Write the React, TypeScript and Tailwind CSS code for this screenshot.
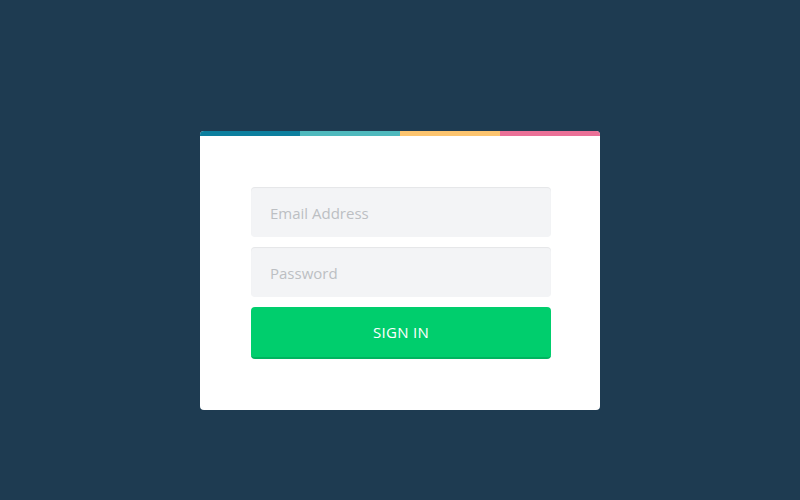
import React from "react";

export default function App() {
  return (
    <div className="w-[800px] h-[500px] bg-[#1e3b51] flex justify-center pt-[131px]" style={{ fontFamily: '"Open Sans", Lato, sans-serif' }}>
      <div className="w-[400px] h-[279px] bg-white rounded-[4px] overflow-hidden flex flex-col">
        <div className="flex h-[5px]">
          <div className="flex-1 bg-[#0c7f9e]" />
          <div className="flex-1 bg-[#4eb9bd]" />
          <div className="flex-1 bg-[#fcc46e]" />
          <div className="flex-1 bg-[#ea7097]" />
        </div>
        <div className="flex flex-col gap-[10px] pt-[51px] pl-[51px] pr-[49px]">
          <input
            type="text"
            placeholder="Email Address"
            className="w-full h-[50px] rounded-[4px] bg-[#f3f4f6] shadow-[inset_0_1px_1px_rgba(0,0,0,0.06)] px-[19px] pt-[2px] text-[15px] text-gray-700 placeholder:text-[#bcbfc3] outline-none"
          />
          <input
            type="password"
            placeholder="Password"
            className="w-full h-[50px] rounded-[4px] bg-[#f3f4f6] shadow-[inset_0_1px_1px_rgba(0,0,0,0.06)] px-[19px] pt-[2px] text-[15px] text-gray-700 placeholder:text-[#bcbfc3] outline-none"
          />
          <button className="w-full h-[52px] rounded-[4px] bg-[#00ce6d] border-b-2 border-[#00b45f] text-white text-[15px] tracking-[0.02em] uppercase">
            Sign In
          </button>
        </div>
      </div>
    </div>
  );
}
